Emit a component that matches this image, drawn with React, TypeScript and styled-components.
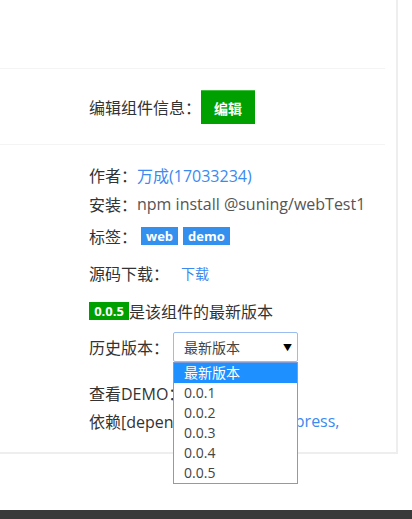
import React, { useState } from "react";
import styled, { createGlobalStyle } from "styled-components";

const GlobalStyle = createGlobalStyle`
  html, body {
    margin: 0;
    padding: 0;
    background: #fff;
  }
  body {
    font-family: "Open Sans", "Noto Sans CJK SC", sans-serif;
    font-size: 16px;
    color: #333;
  }
`;

const Page = styled.div`
  width: 412px;
  height: 519px;
  overflow: hidden;
  display: flex;
  flex-direction: column;
`;

const Panel = styled.div`
  width: 385px;
  padding-right: 11px;
  border-right: 2px solid #eeeeee;
  border-bottom: 2px solid #eeeeee;
`;

const Header = styled.div`
  height: 68px;
  border-bottom: 1px solid #f4f4f4;
`;

const EditBlock = styled.div`
  height: 75px;
  padding-left: 89px;
  display: flex;
  align-items: center;
  border-bottom: 1px solid #f4f4f4;
`;

const Label = styled.span`
  white-space: nowrap;
`;

const EditButton = styled.button`
  width: 54px;
  height: 34px;
  margin: 1px 0 0 0;
  border: none;
  border-top: 1px solid #3fbf3f;
  background: #00a000;
  color: #fff;
  font-family: "Noto Sans CJK SC", sans-serif;
  font-size: 14px;
  font-weight: bold;
  padding: 0;
  cursor: pointer;
`;

const Info = styled.div`
  padding: 16px 0 17px 89px;
`;

const Row = styled.div<{ $mt?: number; $h?: number }>`
  display: flex;
  align-items: center;
  height: ${(p) => p.$h ?? 28}px;
  margin-top: ${(p) => p.$mt ?? 0}px;
  white-space: nowrap;
`;

const Link = styled.a<{ $small?: boolean; $ml?: number }>`
  color: #3a8af0;
  text-decoration: none;
  font-size: ${(p) => (p.$small ? 14 : 16)}px;
  margin-left: ${(p) => p.$ml ?? 0}px;
`;

const Muted = styled.span`
  color: #555;
`;

const TagList = styled.span`
  display: flex;
  gap: 5px;
  margin-left: 4px;
`;

const Tag = styled.span`
  display: inline-block;
  height: 18px;
  line-height: 18px;
  padding: 0 5px;
  background: #3390ee;
  color: #fff;
  font-size: 13px;
  font-weight: bold;
`;

const Badge = styled.span`
  display: inline-block;
  width: 40px;
  height: 18px;
  line-height: 18px;
  text-align: center;
  background: #00a000;
  color: #fff;
  font-size: 13px;
  font-weight: bold;
`;

const SelectWrap = styled.div`
  position: relative;
  margin-left: 4px;
`;

const SelectBox = styled.div`
  width: 108px;
  height: 28px;
  border: 1px solid #99bdf0;
  border-radius: 2px;
  display: flex;
  align-items: center;
  justify-content: space-between;
  padding: 0 5px 0 10px;
  font-size: 14px;
  color: #444;
  background: #fff;
`;

const Caret = styled.span`
  font-size: 9px;
  color: #000;
`;

const OptionList = styled.ul`
  position: absolute;
  left: 0;
  top: 30px;
  width: 123px;
  margin: 0;
  padding: 0;
  list-style: none;
  border: 1px solid #7e9bd6;
  background: #fff;
  z-index: 10;
`;

const OptionItem = styled.li<{ $active?: boolean }>`
  height: 20px;
  line-height: 20px;
  padding-left: 10px;
  font-size: 14px;
  color: ${(p) => (p.$active ? "#fff" : "#444")};
  background: ${(p) => (p.$active ? "#1e90ff" : "transparent")};
`;

const Footer = styled.div`
  margin-top: auto;
  height: 9px;
  background: #3a3a3a;
`;

const versions = ["最新版本", "0.0.1", "0.0.2", "0.0.3", "0.0.4", "0.0.5"];

const App = () => {
  const [selected] = useState(0);

  return (
    <Page>
      <GlobalStyle />
      <Panel>
        <Header />
        <EditBlock>
          <Label>编辑组件信息：</Label>
          <EditButton>编辑</EditButton>
        </EditBlock>
        <Info>
          <Row>
            作者：<Link href="#">万成(17033234)</Link>
          </Row>
          <Row $mt={1}>
            安装：<Muted>npm install @suning/webTest1</Muted>
          </Row>
          <Row $mt={4}>
            标签：
            <TagList>
              <Tag>web</Tag>
              <Tag>demo</Tag>
            </TagList>
          </Row>
          <Row $mt={9}>
            源码下载：
            <Link href="#" $small $ml={12}>
              下载
            </Link>
          </Row>
          <Row $mt={10}>
            <Badge>0.0.5</Badge>是该组件的最新版本
          </Row>
          <Row $mt={7} $h={30}>
            历史版本：
            <SelectWrap>
              <SelectBox>
                <span>{versions[selected]}</span>
                <Caret>▼</Caret>
              </SelectBox>
              <OptionList>
                {versions.map((v, i) => (
                  <OptionItem key={v} $active={i === selected}>
                    {v}
                  </OptionItem>
                ))}
              </OptionList>
            </SelectWrap>
          </Row>
          <Row $mt={17}>
            查看DEMO：<Link href="#">demo</Link>
          </Row>
          <Row>
            依赖[dependencies]：<Link href="#">qs, express,</Link>
          </Row>
        </Info>
      </Panel>
      <Footer />
    </Page>
  );
};

export default App;
